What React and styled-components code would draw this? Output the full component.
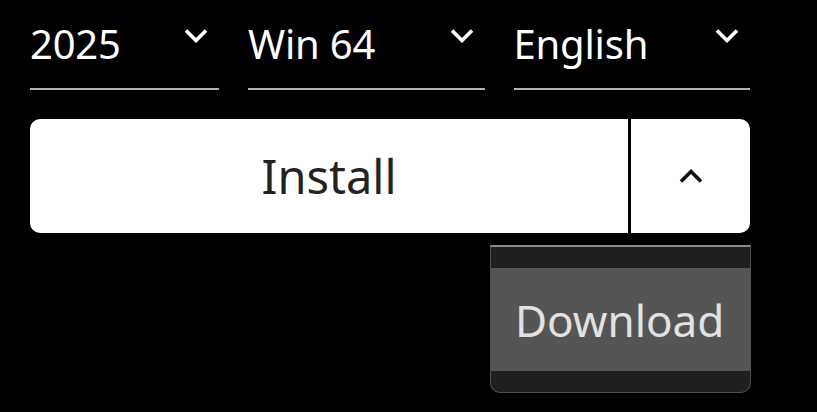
import React from "react";
import styled, { createGlobalStyle } from "styled-components";

const GlobalStyle = createGlobalStyle`
  html, body {
    margin: 0;
    padding: 0;
    background: #000;
  }
  body {
    font-family: "Noto Sans", "Open Sans", sans-serif;
  }
`;

const Page = styled.div`
  width: 720px;
  padding: 16px 0 0 30px;
`;

const Selects = styled.div`
  display: grid;
  grid-template-columns: 189px 1fr 1fr;
  column-gap: 29px;
`;

const Field = styled.div`
  display: flex;
  justify-content: space-between;
  align-items: flex-start;
  padding-bottom: 16px;
  border-bottom: 2px solid #b4b4b4;
  cursor: pointer;

  .field-value {
    color: #fff;
    font-size: 40px;
    line-height: 56px;
    letter-spacing: -0.2px;
  }

  svg {
    flex-shrink: 0;
    margin-top: 13px;
    margin-right: 11px;
  }
`;

const ActionArea = styled.div`
  display: flex;
  flex-direction: column;
  row-gap: 12px;
  margin-top: 29px;
`;

const ActionRow = styled.div`
  display: flex;
  column-gap: 3px;
  height: 114px;
`;

const ActionButton = styled.button`
  display: flex;
  align-items: center;
  justify-content: center;
  flex: ${(props) => (props.$main ? "1" : "0 0 119px")};
  border: none;
  background: #fff;
  color: #222;
  font-family: inherit;
  font-size: 47px;
  padding: 0;
  border-radius: ${(props) => (props.$main ? "10px 0 0 10px" : "0 10px 10px 0")};
  cursor: pointer;
`;

const Menu = styled.div`
  align-self: flex-end;
  margin-right: -1px;
  width: 261px;
  box-sizing: border-box;
  background: #1f1f1f;
  border: 1px solid #4e4e4e;
  border-top: 2px solid #8a8a8a;
  border-radius: 0 0 10px 10px;
  padding: 21px 0 21px;
`;

const MenuItem = styled.div`
  height: 103px;
  display: flex;
  align-items: center;
  padding-left: 24px;
  background: #555;
  color: #e2e2e2;
  font-size: 44px;
`;

const Chevron = ({ up, color }) => (
  <svg width="24" height="14" viewBox="0 0 24 14" fill="none">
    <polyline
      points={up ? "2,12.5 12,2.5 22,12.5" : "2,1.5 12,11.5 22,1.5"}
      stroke={color}
      strokeWidth="3.6"
      strokeLinejoin="miter"
    />
  </svg>
);

const options = ["2025", "Win 64", "English"];

export default function App() {
  return (
    <>
      <GlobalStyle />
      <Page>
        <Selects>
          {options.map((opt) => (
            <Field key={opt}>
              <span className="field-value">{opt}</span>
              <Chevron color="#fff" />
            </Field>
          ))}
        </Selects>
        <ActionArea>
          <ActionRow>
            <ActionButton $main>Install</ActionButton>
            <ActionButton>
              <Chevron up color="#111" />
            </ActionButton>
          </ActionRow>
          <Menu>
            <MenuItem>Download</MenuItem>
          </Menu>
        </ActionArea>
      </Page>
    </>
  );
}
